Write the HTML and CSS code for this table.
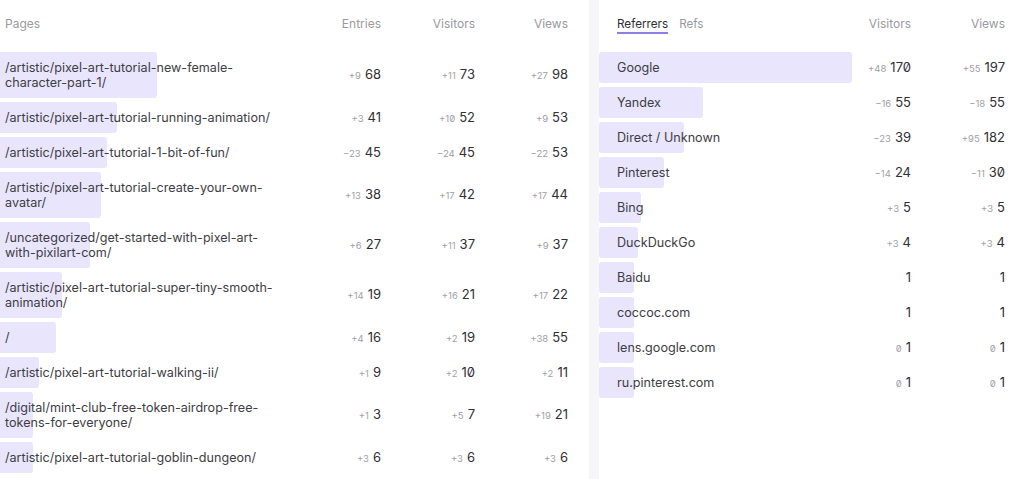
FILE: index.html
```html
<!DOCTYPE html>
<html lang="en">
<head>
  <meta charset="UTF-8">
  <meta name="viewport" content="width=device-width, initial-scale=1.0">
  <title>Pages &amp; Referrers</title>
  <link rel="stylesheet" href="styles.css">
</head>
<body>

<div class="stats">

  <!-- Pages table -->
  <section class="panel panel-pages">
    <div class="head">
      <div class="head-name">Pages</div>
      <div class="head-num">Entries</div>
      <div class="head-num">Visitors</div>
      <div class="head-num">Views</div>
    </div>
    <ul class="rows">
      <li class="row">
        <span class="bar" style="width:157px"></span>
        <span class="name">/artistic/pixel-art-tutorial-new-female-character-part-1/</span>
        <span class="num"><small>+9</small>68</span>
        <span class="num"><small>+11</small>73</span>
        <span class="num"><small>+27</small>98</span>
      </li>
      <li class="row">
        <span class="bar" style="width:117px"></span>
        <span class="name">/artistic/pixel-art-tutorial-running-animation/</span>
        <span class="num"><small>+3</small>41</span>
        <span class="num"><small>+10</small>52</span>
        <span class="num"><small>+9</small>53</span>
      </li>
      <li class="row">
        <span class="bar" style="width:107px"></span>
        <span class="name">/artistic/pixel-art-tutorial-1-bit-of-fun/</span>
        <span class="num"><small>&minus;23</small>45</span>
        <span class="num"><small>&minus;24</small>45</span>
        <span class="num"><small>&minus;22</small>53</span>
      </li>
      <li class="row">
        <span class="bar" style="width:101px"></span>
        <span class="name">/artistic/pixel-art-tutorial-create-your-own-avatar/</span>
        <span class="num"><small>+13</small>38</span>
        <span class="num"><small>+17</small>42</span>
        <span class="num"><small>+17</small>44</span>
      </li>
      <li class="row">
        <span class="bar" style="width:90px"></span>
        <span class="name">/uncategorized/get-started-with-pixel-art-with-pixilart-com/</span>
        <span class="num"><small>+6</small>27</span>
        <span class="num"><small>+11</small>37</span>
        <span class="num"><small>+9</small>37</span>
      </li>
      <li class="row">
        <span class="bar" style="width:62px"></span>
        <span class="name">/artistic/pixel-art-tutorial-super-tiny-smooth-animation/</span>
        <span class="num"><small>+14</small>19</span>
        <span class="num"><small>+16</small>21</span>
        <span class="num"><small>+17</small>22</span>
      </li>
      <li class="row">
        <span class="bar" style="width:56px"></span>
        <span class="name">/</span>
        <span class="num"><small>+4</small>16</span>
        <span class="num"><small>+2</small>19</span>
        <span class="num"><small>+38</small>55</span>
      </li>
      <li class="row">
        <span class="bar" style="width:39px"></span>
        <span class="name">/artistic/pixel-art-tutorial-walking-ii/</span>
        <span class="num"><small>+1</small>9</span>
        <span class="num"><small>+2</small>10</span>
        <span class="num"><small>+2</small>11</span>
      </li>
      <li class="row">
        <span class="bar" style="width:33px"></span>
        <span class="name">/digital/mint-club-free-token-airdrop-free-tokens-for-everyone/</span>
        <span class="num"><small>+1</small>3</span>
        <span class="num"><small>+5</small>7</span>
        <span class="num"><small>+19</small>21</span>
      </li>
      <li class="row">
        <span class="bar" style="width:33px"></span>
        <span class="name">/artistic/pixel-art-tutorial-goblin-dungeon/</span>
        <span class="num"><small>+3</small>6</span>
        <span class="num"><small>+3</small>6</span>
        <span class="num"><small>+3</small>6</span>
      </li>
    </ul>
  </section>

  <!-- Referrers table -->
  <section class="panel panel-refs">
    <div class="head">
      <div class="head-name tabs">
        <span class="tab active">Referrers</span>
        <span class="tab">Refs</span>
      </div>
      <div class="head-num">Visitors</div>
      <div class="head-num">Views</div>
    </div>
    <ul class="rows">
      <li class="row">
        <span class="bar" style="width:253px"></span>
        <span class="name">Google</span>
        <span class="num"><small>+48</small>170</span>
        <span class="num"><small>+55</small>197</span>
      </li>
      <li class="row">
        <span class="bar" style="width:104px"></span>
        <span class="name">Yandex</span>
        <span class="num"><small>&minus;16</small>55</span>
        <span class="num"><small>&minus;18</small>55</span>
      </li>
      <li class="row">
        <span class="bar" style="width:85px"></span>
        <span class="name">Direct / Unknown</span>
        <span class="num"><small>&minus;23</small>39</span>
        <span class="num"><small>+95</small>182</span>
      </li>
      <li class="row">
        <span class="bar" style="width:65px"></span>
        <span class="name">Pinterest</span>
        <span class="num"><small>&minus;14</small>24</span>
        <span class="num"><small>&minus;11</small>30</span>
      </li>
      <li class="row">
        <span class="bar" style="width:42px"></span>
        <span class="name">Bing</span>
        <span class="num"><small>+3</small>5</span>
        <span class="num"><small>+3</small>5</span>
      </li>
      <li class="row">
        <span class="bar" style="width:39px"></span>
        <span class="name">DuckDuckGo</span>
        <span class="num"><small>+3</small>4</span>
        <span class="num"><small>+3</small>4</span>
      </li>
      <li class="row">
        <span class="bar" style="width:35px"></span>
        <span class="name">Baidu</span>
        <span class="num">1</span>
        <span class="num">1</span>
      </li>
      <li class="row">
        <span class="bar" style="width:35px"></span>
        <span class="name">coccoc.com</span>
        <span class="num">1</span>
        <span class="num">1</span>
      </li>
      <li class="row">
        <span class="bar" style="width:35px"></span>
        <span class="name">lens.google.com</span>
        <span class="num"><small>0</small>1</span>
        <span class="num"><small>0</small>1</span>
      </li>
      <li class="row">
        <span class="bar" style="width:35px"></span>
        <span class="name">ru.pinterest.com</span>
        <span class="num"><small>0</small>1</span>
        <span class="num"><small>0</small>1</span>
      </li>
    </ul>
  </section>

</div>

</body>
</html>
```

FILE: styles.css
```css
html, body {
  height: 100%;
  overflow: hidden;
}

body {
  margin: 0;
  font-family: Inter, "Noto Sans", sans-serif;
  color: #3a3a3f;
  background: #f6f6f8;
}

.stats {
  display: grid;
  grid-template-columns: 589px 1fr;
  gap: 10px;
  height: 100%;
}

.panel {
  background: #ffffff;
}

.panel-pages {
  padding-right: 21px;
}

.panel-refs {
  padding-right: 19px;
}

/* Header row */
.head {
  display: grid;
  align-items: center;
  height: 46px;
  font-size: 12px;
  color: #9a9aa0;
}

.panel-pages .head,
.panel-pages .row {
  grid-template-columns: 1fr 94px 94px 93px;
}

.panel-refs .head,
.panel-refs .row {
  grid-template-columns: 1fr 94px 94px;
}

.head-name {
  padding-left: 5px;
}

.panel-refs .head-name {
  padding-left: 18px;
}

.head-num {
  text-align: right;
}

.tabs {
  display: flex;
  gap: 11px;
  padding-top: 5px;
  font-size: 11.7px;
}

.tab {
  padding-bottom: 3px;
}

.tab.active {
  color: #2e2e33;
  box-shadow: inset 0 -2px 0 #8c80e6;
}

/* Table rows */
.rows {
  list-style: none;
  margin: 0;
  padding: 6px 0 0;
  display: flex;
  flex-direction: column;
  gap: 4px;
}

.row {
  position: relative;
  display: grid;
  align-items: center;
  line-height: 15px;
}

.bar {
  position: absolute;
  top: 0;
  bottom: 0;
  left: 0;
  background: #e8e5fd;
  border-radius: 3px;
}

.panel-pages .bar {
  border-radius: 0 3px 3px 0;
}

.name {
  position: relative;
  padding: 8px 4px 8px 5px;
  font-size: 12.6px;
  color: #3d3d43;
}

.panel-refs .name {
  padding-left: 18px;
}

.num {
  position: relative;
  text-align: right;
  font-size: 13px;
  color: #2f2f34;
  font-feature-settings: "zero";
}

.num small {
  font-size: 9.5px;
  color: #a0a0a6;
  margin-right: 4px;
  font-feature-settings: "zero";
}
```
